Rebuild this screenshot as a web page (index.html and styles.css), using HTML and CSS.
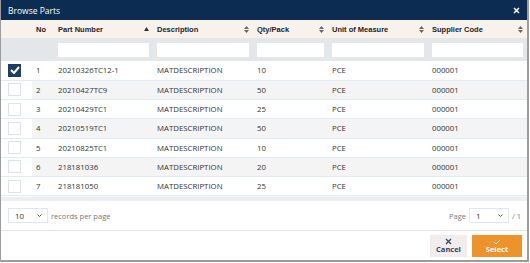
FILE: index.html
```html
<!DOCTYPE html>
<html lang="en">
<head>
    <meta charset="UTF-8">
    <meta name="viewport" content="width=device-width, initial-scale=1.0">
    <title>Browse Parts</title>
    <link rel="stylesheet" href="styles.css">
</head>
<body>
    <div class="modal">
        <div class="modal-title">
            <span>Browse Parts</span>
            <svg class="close" width="7" height="7" viewBox="0 0 7 7"><path d="M1 1L6 6M6 1L1 6" stroke="#fff" stroke-width="1.5"/></svg>
        </div>

        <div class="grid">
            <table class="grid-table">
                <colgroup>
                    <col style="width:31px"><col style="width:22px"><col style="width:99px"><col style="width:100px"><col style="width:75px"><col style="width:100px"><col style="width:99px">
                </colgroup>
                <tr class="head">
                    <th></th>
                    <th>No</th>
                    <th><span class="th">Part Number <svg width="5" height="4" viewBox="0 0 5 4"><path d="M0 4L2.5 0L5 4Z" fill="#333"/></svg></span></th>
                    <th><span class="th">Description <svg width="5" height="7" viewBox="0 0 5 7"><path d="M0 3L2.5 0L5 3ZM0 4L2.5 7L5 4Z" fill="#666"/></svg></span></th>
                    <th><span class="th">Qty/Pack <svg width="5" height="7" viewBox="0 0 5 7"><path d="M0 3L2.5 0L5 3ZM0 4L2.5 7L5 4Z" fill="#666"/></svg></span></th>
                    <th><span class="th">Unit of Measure <svg width="5" height="7" viewBox="0 0 5 7"><path d="M0 3L2.5 0L5 3ZM0 4L2.5 7L5 4Z" fill="#666"/></svg></span></th>
                    <th><span class="th">Supplier Code <svg width="5" height="7" viewBox="0 0 5 7"><path d="M0 3L2.5 0L5 3ZM0 4L2.5 7L5 4Z" fill="#666"/></svg></span></th>
                </tr>
                <tr class="filter">
                    <td></td>
                    <td></td>
                    <td><div class="filter-box"></div></td>
                    <td><div class="filter-box"></div></td>
                    <td><div class="filter-box"></div></td>
                    <td><div class="filter-box"></div></td>
                    <td><div class="filter-box"></div></td>
                </tr>
            </table>

            <div class="grid-body">
                <table class="grid-table">
                    <colgroup>
                        <col style="width:31px"><col style="width:22px"><col style="width:99px"><col style="width:100px"><col style="width:75px"><col style="width:100px"><col style="width:99px">
                    </colgroup>
                    <tr>
                        <td><span class="check on"><svg width="10" height="8" viewBox="0 0 10 8"><path d="M1 4L4 7L9 1" stroke="#fff" stroke-width="2" fill="none"/></svg></span></td>
                        <td>1</td><td>20210326TC12-1</td><td>MATDESCRIPTION</td><td>10</td><td>PCE</td><td>000001</td>
                    </tr>
                    <tr>
                        <td><span class="check"></span></td>
                        <td>2</td><td>20210427TC9</td><td>MATDESCRIPTION</td><td>50</td><td>PCE</td><td>000001</td>
                    </tr>
                    <tr>
                        <td><span class="check"></span></td>
                        <td>3</td><td>20210429TC1</td><td>MATDESCRIPTION</td><td>25</td><td>PCE</td><td>000001</td>
                    </tr>
                    <tr>
                        <td><span class="check"></span></td>
                        <td>4</td><td>20210519TC1</td><td>MATDESCRIPTION</td><td>50</td><td>PCE</td><td>000001</td>
                    </tr>
                    <tr>
                        <td><span class="check"></span></td>
                        <td>5</td><td>20210825TC1</td><td>MATDESCRIPTION</td><td>10</td><td>PCE</td><td>000001</td>
                    </tr>
                    <tr>
                        <td><span class="check"></span></td>
                        <td>6</td><td>218181036</td><td>MATDESCRIPTION</td><td>20</td><td>PCE</td><td>000001</td>
                    </tr>
                    <tr>
                        <td><span class="check"></span></td>
                        <td>7</td><td>218181050</td><td>MATDESCRIPTION</td><td>25</td><td>PCE</td><td>000001</td>
                    </tr>
                    <tr>
                        <td><span class="check"></span></td>
                        <td></td><td></td><td></td><td></td><td></td><td></td>
                    </tr>
                </table>
            </div>
            <div class="hscroll"></div>
        </div>

        <div class="pager">
            <div class="pager-left">
                <div class="select size">10 <svg width="5" height="3" viewBox="0 0 5 3"><path d="M0.5 0.5L2.5 2.5L4.5 0.5" stroke="#555" fill="none"/></svg></div>
                <span class="muted">records per page</span>
            </div>
            <div class="pager-right">
                <span class="muted">Page</span>
                <div class="select page">1 <svg width="5" height="3" viewBox="0 0 5 3"><path d="M0.5 0.5L2.5 2.5L4.5 0.5" stroke="#555" fill="none"/></svg></div>
                <span class="muted">/ 1</span>
            </div>
        </div>

        <div class="modal-foot">
            <button class="btn cancel">
                <svg width="7" height="7" viewBox="0 0 7 7"><path d="M1 1L6 6M6 1L1 6" stroke="#2a4566" stroke-width="1.2"/></svg>
                <span>Cancel</span>
            </button>
            <button class="btn select-btn">
                <svg width="8" height="6" viewBox="0 0 8 6"><path d="M1 3L3 5L7 1" stroke="#fff" stroke-width="0.9" fill="none"/></svg>
                <span>Select</span>
            </button>
        </div>
    </div>
</body>
</html>
```

FILE: styles.css
```css
body {
    margin: 0;
    font-family: "Open Sans", sans-serif;
    background: #fff;
}

.modal {
    width: 529px;
    height: 262px;
    box-sizing: border-box;
    border: 1px solid #9c9c9c;
    border-top: 0;
    border-right-width: 2px;
    border-bottom-width: 2px;
    display: flex;
    flex-direction: column;
}

.modal-title {
    height: 20px;
    background: #0c2d51;
    color: #fff;
    font-size: 8.5px;
    display: flex;
    align-items: center;
    justify-content: space-between;
    padding: 0 7px 0 7px;
}

.grid-table {
    width: 526px;
    table-layout: fixed;
    border-collapse: collapse;
}

.grid-table th,
.grid-table td {
    padding: 0 4px;
    text-align: left;
    white-space: nowrap;
    overflow: hidden;
}

.head {
    height: 18px;
    background: #f8f2ec;
}

.head th {
    font-family: "Liberation Sans", Arial, sans-serif;
    font-size: 7.5px;
    font-weight: bold;
    color: #222;
}

.th {
    display: flex;
    align-items: center;
    justify-content: space-between;
}

.filter {
    height: 23px;
    background: #e4e7ea;
}

.filter-box {
    height: 14px;
    background: #fff;
}

.grid-body {
    height: 136px;
    overflow: hidden;
}

.grid-body tr {
    height: 19.25px;
    border-bottom: 1px solid #e3eaf1;
    font-size: 7.8px;
    color: #333;
}

.grid-body tr:nth-child(even) td {
    background: #f4f4f4;
}

.grid-body tr td:first-child {
    background: #fff;
    padding-left: 7px;
}

.check {
    display: flex;
    align-items: center;
    justify-content: center;
    width: 13px;
    height: 13px;
    box-sizing: border-box;
    border: 1px solid #dde2e8;
    background: #fff;
}

.check.on {
    background: #1e3d63;
    border-color: #1e3d63;
}

.hscroll {
    height: 4px;
    background: #eceef0;
}

.pager {
    height: 29px;
    display: flex;
    align-items: center;
    justify-content: space-between;
    padding: 0 6px 0 7px;
    border-bottom: 1px solid #e4e4e4;
    font-size: 7.5px;
}

.pager-left,
.pager-right {
    display: flex;
    align-items: center;
    gap: 3px;
}

.muted {
    color: #777;
}

.select {
    display: flex;
    align-items: center;
    justify-content: space-between;
    height: 15px;
    box-sizing: border-box;
    border: 1px solid #dfe6ee;
    padding: 0 5px 0 6px;
    color: #333;
    font-size: 8px;
}

.select.size {
    width: 40px;
}

.select.page {
    width: 40px;
}

.modal-foot {
    flex: 1;
    display: flex;
    justify-content: flex-end;
    align-items: flex-start;
    gap: 5px;
    padding: 4px 5px 0 0;
}

.btn {
    height: 22px;
    border: 0;
    padding: 0;
    display: flex;
    flex-direction: column;
    align-items: center;
    justify-content: center;
    gap: 0;
    font-family: "Open Sans", sans-serif;
    font-size: 7.5px;
    font-weight: bold;
    line-height: 9px;
}

.btn.cancel {
    width: 37px;
    background: #f2ecec;
    color: #2a4566;
}

.btn.select-btn {
    width: 50px;
    background: #f0922c;
    color: #fff;
}
```
